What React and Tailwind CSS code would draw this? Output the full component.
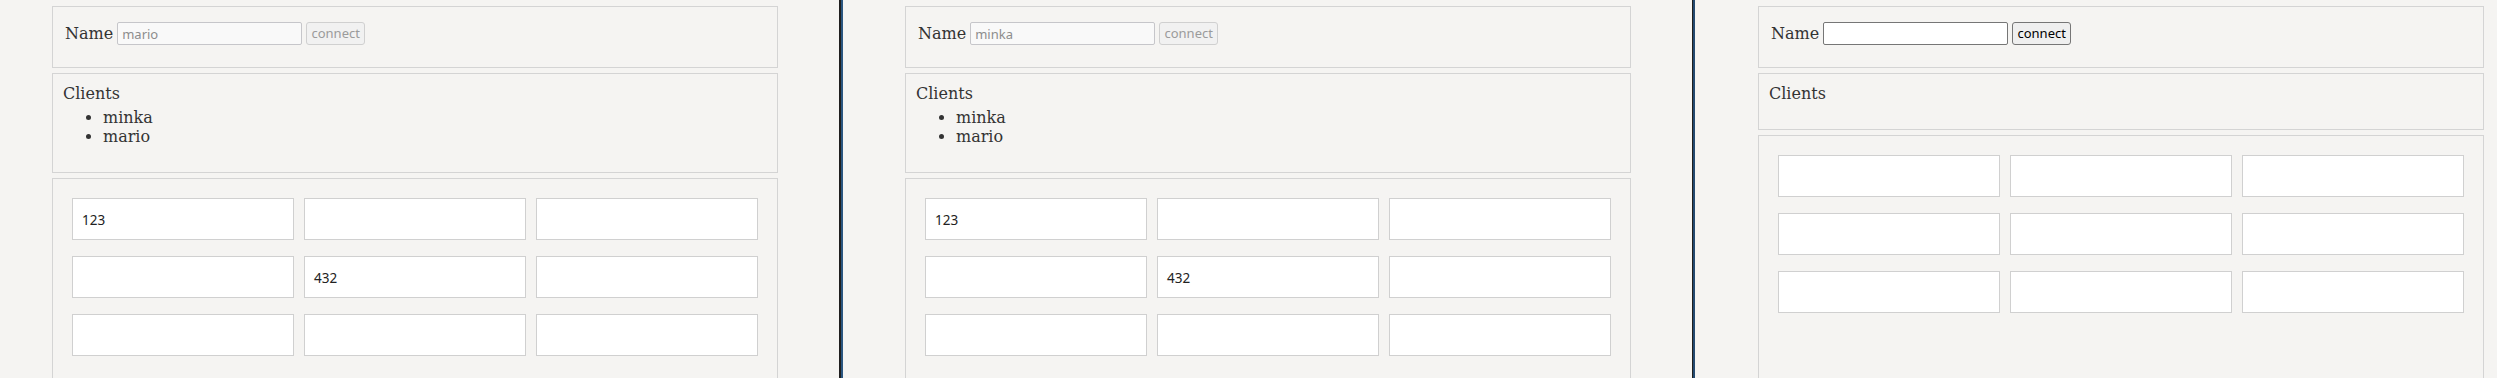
import React from 'react';

const serif = "font-['DejaVu_Serif',serif] text-[16px] text-[#333]";
const sans = "font-['Noto_Sans',sans-serif]";

const clients = ['minka', 'mario'];

const NamePanel = ({ value, connected }) => (
  <div className="h-[62px] border border-[#d4d4d4] pt-[15px] px-[12px]">
    <div className="flex items-center h-[23px] gap-[4px]">
      <span className={`${serif} leading-[19px]`}>Name</span>
      {connected ? (
        <>
          <input
            disabled
            defaultValue={value}
            className={`${sans} w-[185px] h-[23px] px-[4px] text-[13px] text-[#8d8d8d] bg-[#f9f9f9] border border-[#c6c6ca] rounded-[2px] outline-none`}
          />
          <button
            disabled
            className={`${sans} w-[59px] h-[23px] text-[13px] text-[#9b9b9b] bg-[#f1f1f1] border border-[#d0d0d0] rounded-[3px]`}
          >
            connect
          </button>
        </>
      ) : (
        <>
          <input
            defaultValue=""
            className={`${sans} w-[185px] h-[23px] px-[4px] text-[13px] text-black bg-white border border-[#767676] rounded-[2px] outline-none`}
          />
          <button
            className={`${sans} w-[59px] h-[23px] text-[13px] text-black bg-[#efefef] border border-[#767676] rounded-[3px]`}
          >
            connect
          </button>
        </>
      )}
    </div>
  </div>
);

const ClientsPanel = ({ list }) => (
  <div className={`mt-[5px] border border-[#d4d4d4] pt-[10px] px-[10px] ${list.length ? 'h-[100px]' : 'h-[57px]'}`}>
    <div className={`${serif} leading-[19px]`}>Clients</div>
    {list.length > 0 && (
      <ul className={`${serif} mt-[5px] pl-[40px] list-disc leading-[19px]`}>
        {list.map(c => (
          <li key={c}>{c}</li>
        ))}
      </ul>
    )}
  </div>
);

const Board = ({ cells }) => (
  <div className="mt-[5px] h-[300px] border border-[#d4d4d4] pt-[19px] px-[19px]">
    <div className="grid grid-cols-[repeat(3,222px)] gap-x-[10px] gap-y-[16px]">
      {cells.map((v, i) => (
        <div
          key={i}
          className={`${sans} h-[42px] bg-white border border-[#d0d0d0] flex items-center pl-[9px] pt-[3px] text-[13.5px] text-[#222]`}
        >
          {v}
        </div>
      ))}
    </div>
  </div>
);

const Window = ({ name, connected, list, cells }) => (
  <div className="w-[726px] pt-[6px]">
    <NamePanel value={name} connected={connected} />
    <ClientsPanel list={list} />
    <Board cells={cells} />
  </div>
);

const filled = ['123', '', '', '', '432', '', '', '', ''];
const empty = ['', '', '', '', '', '', '', '', ''];

export default function App() {
  return (
    <div className="flex h-[378px] w-[2497px] overflow-hidden bg-[#f5f4f2]">
      <div className="w-[839px] shrink-0 pl-[52px]">
        <Window name="mario" connected list={clients} cells={filled} />
      </div>
      <div className="w-[2px] shrink-0 bg-[#1f1f1f]" />
      <div className="w-[2px] shrink-0 bg-[#2b5680]" />
      <div className="w-[849px] shrink-0 pl-[62px]">
        <Window name="minka" connected list={clients} cells={filled} />
      </div>
      <div className="w-[1px] shrink-0 bg-[#1f1f1f]" />
      <div className="w-[2px] shrink-0 bg-[#244a70]" />
      <div className="flex-1 pl-[63px]">
        <Window name="" connected={false} list={[]} cells={empty} />
      </div>
    </div>
  );
}
